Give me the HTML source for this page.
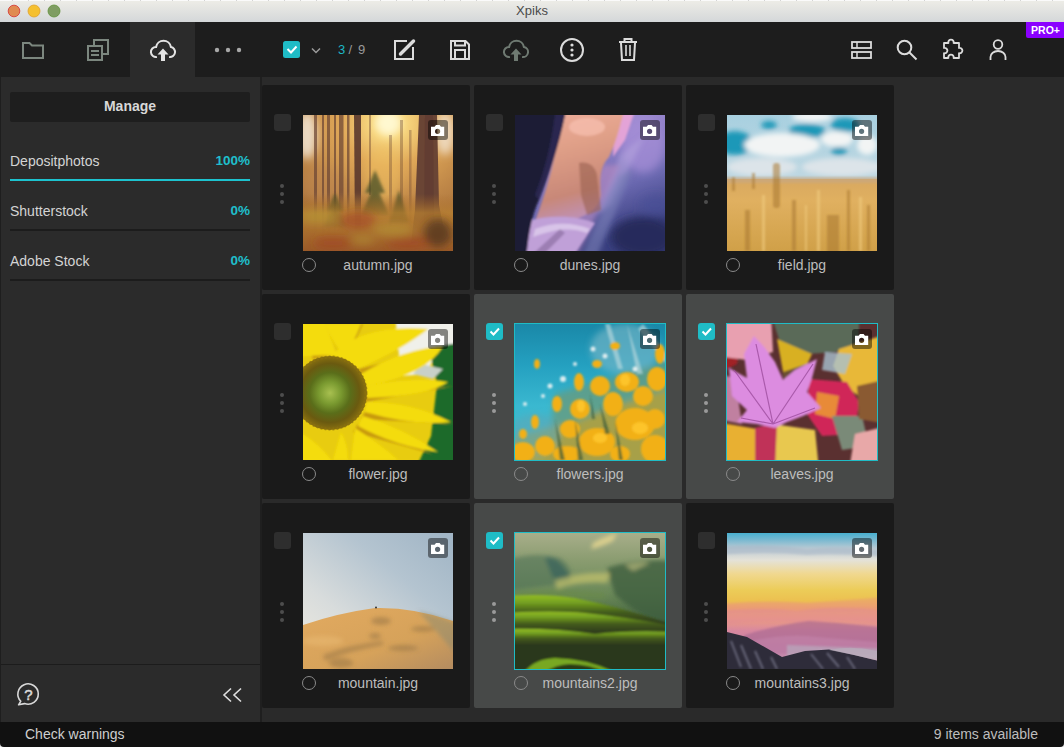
<!DOCTYPE html>
<html><head><meta charset="utf-8"><style>
*{margin:0;padding:0;box-sizing:border-box}
html,body{width:1064px;height:747px;overflow:hidden;background:#e8e8e8;font-family:"Liberation Sans",sans-serif}
.abs{position:absolute}
#title{left:0;top:0;width:1064px;height:22px;background:linear-gradient(#eeede7,#d4d7d9)}
#title:before{content:"";position:absolute;left:0;top:0;width:1064px;height:1px;background:repeating-linear-gradient(90deg,#fafafa 0,#fafafa 12px,#d4d4d4 12px,#d4d4d4 13px,#fafafa 13px,#fafafa 16px)}
#title .t{left:0;width:1064px;top:3px;text-align:center;font-size:13px;color:#4a4a4a}
#toolbar{left:0;top:22px;width:1064px;height:55px;background:#1d1d1d}
#left{left:0;top:77px;width:260px;height:645px;background:#2b2b2b}
#sep{left:260px;top:77px;width:2px;height:645px;background:#1f1f1f}
#grid{left:262px;top:77px;width:802px;height:645px;background:#2a2a2a}
#status{left:0;top:722px;width:1064px;height:25px;background:#111111;border-radius:0 0 4px 4px}
.card{position:absolute;width:208px;height:205px;background:#1a1a1a;border-radius:2px}
.card.sel{background:#474948}
.card .cb{position:absolute;left:12px;top:29px;width:17px;height:17px;border-radius:3px;background:#2e2e2e}
.card.sel .cb{background:#1fbcc6}
.card .img{position:absolute;left:41px;top:30px;width:150px;height:136px;overflow:hidden}
.card.sel .img{box-shadow:0 0 0 1px #1fbcc6}
.card .img svg{display:block}
.card .cam{position:absolute;left:125px;top:5px;width:20px;height:20px;border-radius:3px;background:rgba(0,0,0,.45)}
.card .rad{position:absolute;left:40px;top:173px;width:14px;height:14px;border-radius:50%;border:1px solid #8a8a8a}
.card .nm{position:absolute;left:54px;width:124px;top:172px;text-align:center;font-size:14px;color:#bdbdbd;white-space:nowrap}
.card .dots{position:absolute;left:18px;top:99px;width:4px;height:20px}
.card .dots i{display:block;width:4px;height:4px;border-radius:50%;background:#4d4d4d;margin-bottom:4px}
.card.sel .dots i{background:#9a9a9a}
.lbl{position:absolute;font-size:14px;color:#d4d4d4;white-space:nowrap}
.pct{position:absolute;font-size:13.5px;font-weight:bold;color:#1fbfcc;text-align:right;white-space:nowrap}
</style></head><body>
<div id="title" class="abs">
<svg class="abs" style="left:0;top:0" width="70" height="22"><circle cx="14" cy="11" r="5.8" fill="#e08a50" stroke="#d84a44" stroke-width="1"/><circle cx="34" cy="11" r="6" fill="#f5c02f" stroke="#e0a12a" stroke-width=".8"/><circle cx="54" cy="11" r="6" fill="#7f9d62" stroke="#5f8f3a" stroke-width=".8"/></svg>
<div class="abs t">Xpiks</div></div>
<div id="toolbar" class="abs"><div class="abs" style="left:130px;top:0;width:65px;height:55px;background:#2b2b2b"></div></div>
<div id="left" class="abs">
  <div class="abs" style="left:10px;top:15px;width:240px;height:30px;background:#1e1e1e;border-radius:2px"></div>
  <div class="abs" style="left:10px;top:21px;width:240px;text-align:center;font-size:14px;font-weight:bold;color:#d8d8d8">Manage</div>
  <div class="lbl" style="left:10px;top:76px">Depositphotos</div>
  <div class="pct" style="right:10px;top:76px">100%</div>
  <div class="abs" style="left:10px;top:102px;width:240px;height:2px;background:#1dc3cf"></div>
  <div class="lbl" style="left:10px;top:126px">Shutterstock</div>
  <div class="pct" style="right:10px;top:126px">0%</div>
  <div class="abs" style="left:10px;top:152px;width:240px;height:2px;background:#1c1c1c"></div>
  <div class="lbl" style="left:10px;top:176px">Adobe Stock</div>
  <div class="pct" style="right:10px;top:176px">0%</div>
  <div class="abs" style="left:10px;top:202px;width:240px;height:2px;background:#1c1c1c"></div>
  <div class="abs" style="left:0;top:587px;width:260px;height:1px;background:#1c1c1c"></div>
  <div class="abs" style="left:0;top:0;width:1px;height:645px;background:#1e1e1e"></div>
</div>
<div id="sep" class="abs"></div>
<div id="grid" class="abs"></div>
<div class="card" style="left:262px;top:85px"><div class="cb"></div><div class="dots"><i></i><i></i><i></i></div><div class="img"><svg width="150" height="136" viewBox="0 0 150 136"><defs>
<radialGradient id="a1" cx="0.57" cy="0.06" r="0.9">
 <stop offset="0" stop-color="#fff4c0"/><stop offset="0.12" stop-color="#f8d880"/><stop offset="0.35" stop-color="#e0a858"/><stop offset="0.65" stop-color="#c08848"/><stop offset="1" stop-color="#a06a38"/>
</radialGradient>
<linearGradient id="a2" x1="0" y1="0" x2="0" y2="1">
 <stop offset="0" stop-color="#a86a2a" stop-opacity="0"/><stop offset="0.58" stop-color="#a86a2a" stop-opacity="0"/><stop offset="0.72" stop-color="#b88030" stop-opacity=".75"/><stop offset="1" stop-color="#9a5a28"/>
</linearGradient>
<linearGradient id="af" x1="0" y1="0" x2="0" y2="1"><stop offset="0" stop-color="#fff"/><stop offset=".55" stop-color="#fff"/><stop offset=".85" stop-color="#fff" stop-opacity="0"/></linearGradient>
<mask id="am" maskUnits="userSpaceOnUse" x="-10" y="-10" width="170" height="156"><rect x="-10" y="-10" width="170" height="156" fill="url(#af)"/></mask>
<filter id="ab" x="-10%" y="-10%" width="120%" height="120%"><feGaussianBlur stdDeviation="0.6"/></filter>
<filter id="ab3" x="-20%" y="-20%" width="140%" height="140%"><feGaussianBlur stdDeviation="1.5"/></filter>
<filter id="ab2" x="-20%" y="-20%" width="140%" height="140%"><feGaussianBlur stdDeviation="4"/></filter>
</defs>
<rect width="150" height="136" fill="url(#a1)"/>
<g filter="url(#ab2)">
<ellipse cx="4" cy="20" rx="10" ry="24" fill="#f4ece0" opacity=".8"/>
<ellipse cx="142" cy="18" rx="10" ry="22" fill="#f4e8da" opacity=".75"/>
<ellipse cx="85" cy="8" rx="12" ry="12" fill="#fff8d0"/>
<ellipse cx="80" cy="60" rx="18" ry="30" fill="#f0c060" opacity=".5"/>
<ellipse cx="20" cy="70" rx="22" ry="18" fill="#c08850" opacity=".5"/>
</g>
<g filter="url(#ab)" mask="url(#am)">
<g fill="#6a4434" opacity=".7">
<rect x="11" y="0" width="3" height="120"/><rect x="19" y="0" width="2" height="120"/><rect x="24" y="0" width="3" height="120"/>
<rect x="36" y="0" width="4.5" height="120"/><rect x="44" y="0" width="2.5" height="120"/><rect x="31" y="0" width="2" height="120"/>
<rect x="66" y="0" width="2" height="80" opacity=".6"/><rect x="86" y="20" width="3" height="100" opacity=".5"/><rect x="97" y="5" width="3" height="115" opacity=".55"/><rect x="106" y="15" width="2.5" height="105" opacity=".5"/>
</g>
<path d="M51 0 H58 L58 120 H52 Z" fill="#5a382c" opacity=".9"/>
</g>
<g filter="url(#ab)">
<path d="M116 0 H134 L136 90 L140 110 L150 128 L108 128 L112 95 Z" fill="#6a4434"/>
<path d="M122 0 H130 L131 110 H121 Z" fill="#5a382c" opacity=".5"/>
</g>
<g filter="url(#ab3)" fill="#3e4a22" opacity=".7"><path d="M72 55 L62 78 H82 Z"/><path d="M72 68 L58 100 H86 Z"/><path d="M32 78 L24 96 H40Z"/><path d="M32 88 L20 112 H44 Z"/><path d="M96 75 L86 108 H106 Z"/></g>
<rect width="150" height="136" fill="url(#a2)"/>
<g filter="url(#ab2)">
<g fill="#a03a20" opacity=".5"><ellipse cx="55" cy="105" rx="18" ry="9"/><ellipse cx="30" cy="128" rx="20" ry="6"/><ellipse cx="105" cy="128" rx="22" ry="6"/></g>
<g fill="#b8a038" opacity=".5"><ellipse cx="15" cy="102" rx="18" ry="7"/><ellipse cx="90" cy="115" rx="20" ry="6"/><ellipse cx="60" cy="125" rx="12" ry="4"/></g>
<ellipse cx="135" cy="118" rx="14" ry="14" fill="#4a3020" opacity=".7"/>
</g>
</svg><div class="cam"><svg width="20" height="20" viewBox="0 0 20 20" style="display:block"><path fill-rule="evenodd" d="M3 6.8 H6.6 L8 5 H11.6 L13 6.8 H16.2 V16 H3 Z M12.2 11.3 A2.6 2.6 0 1 0 7 11.3 A2.6 2.6 0 1 0 12.2 11.3 Z" fill="#fff"/></svg></div></div><div class="rad"></div><div class="nm">autumn.jpg</div></div>
<div class="card" style="left:474px;top:85px"><div class="cb"></div><div class="dots"><i></i><i></i><i></i></div><div class="img"><svg width="150" height="136" viewBox="0 0 150 136"><defs>
<linearGradient id="d1" x1="0" y1="0" x2="0.4" y2="1"><stop offset="0" stop-color="#b8a0e0"/><stop offset=".4" stop-color="#9080c8"/><stop offset=".7" stop-color="#6a68b0"/><stop offset="1" stop-color="#3a4080"/></linearGradient>
<linearGradient id="d2" x1="0" y1="0" x2="0.2" y2="1"><stop offset="0" stop-color="#f0b0a0"/><stop offset=".4" stop-color="#e0a088"/><stop offset=".8" stop-color="#c88878"/><stop offset="1" stop-color="#c090b0"/></linearGradient>
<filter id="db" x="-10%" y="-10%" width="120%" height="120%"><feGaussianBlur stdDeviation="1.2"/></filter>
<filter id="db2" x="-30%" y="-30%" width="160%" height="160%"><feGaussianBlur stdDeviation="4"/></filter>
<filter id="db3" x="-30%" y="-30%" width="160%" height="160%"><feGaussianBlur stdDeviation="2.5"/></filter>
</defs>
<rect width="150" height="136" fill="url(#d1)"/>
<g filter="url(#db2)">
<ellipse cx="128" cy="30" rx="22" ry="28" fill="#a890d8" opacity=".7"/>
<ellipse cx="128" cy="122" rx="32" ry="20" fill="#262c5c"/>
<ellipse cx="140" cy="90" rx="15" ry="10" fill="#4a5098" opacity=".6"/>
</g>
<g filter="url(#db3)"><path d="M105 40 L130 20 L96 90 L80 100 Z" fill="#b8a8e0" opacity=".5"/><path d="M88 50 L105 50 L60 146 L35 146 Z" fill="#b088c0" opacity=".7"/><path d="M104 60 L118 55 L80 146 L64 146 Z" fill="#7a80b8" opacity=".6"/></g>
<g filter="url(#db)">
<path d="M100 -10 H122 L110 25 L98 42 Z" fill="#f0a8d8" opacity=".85"/>

<path d="M50 -10 H110 L108 0 C104 15 100 30 94 42 C86 50 84 62 86 80 C84 95 70 104 42 108 L20 106 C30 80 40 48 50 -10 Z" fill="url(#d2)"/>
<ellipse cx="72" cy="12" rx="18" ry="9" fill="#f8c0b0" opacity=".7"/>
<path d="M64 48 C72 46 80 50 82 60 L86 95 L72 100 L66 80 Z" fill="#9a6050" opacity=".6"/>
<path d="M12 106 C35 100 60 100 80 108 L55 146 H8 Z" fill="#c0a0d8"/>
<path d="M20 114 C40 106 60 108 75 114 L72 118 C55 112 40 114 18 122 Z" fill="#e8dcf4" opacity=".6"/>
<path d="M10 146 L45 114 L50 118 L22 146Z" fill="#5a4070" opacity=".35"/>
<path d="M-10 -10 H52 L50 0 C44 30 34 60 24 85 C17 100 14 115 11 146 H-10 Z" fill="#1c1b36"/>
<path d="M40 -10 H52 L50 0 C44 30 34 60 24 85 L20 80 C30 55 36 30 40 0Z" fill="#2e2c58" opacity=".8"/>
</g>
</svg><div class="cam"><svg width="20" height="20" viewBox="0 0 20 20" style="display:block"><path fill-rule="evenodd" d="M3 6.8 H6.6 L8 5 H11.6 L13 6.8 H16.2 V16 H3 Z M12.2 11.3 A2.6 2.6 0 1 0 7 11.3 A2.6 2.6 0 1 0 12.2 11.3 Z" fill="#fff"/></svg></div></div><div class="rad"></div><div class="nm">dunes.jpg</div></div>
<div class="card" style="left:686px;top:85px"><div class="cb"></div><div class="dots"><i></i><i></i><i></i></div><div class="img"><svg width="150" height="136" viewBox="0 0 150 136"><defs>
<linearGradient id="f1" x1="0" y1="0" x2="0" y2="1"><stop offset="0" stop-color="#a8d0e0"/><stop offset=".5" stop-color="#c0d8e2"/><stop offset="1" stop-color="#c8d8e0"/></linearGradient>
<linearGradient id="f2" x1="0" y1="0" x2="0" y2="1"><stop offset="0" stop-color="#d8a860"/><stop offset=".3" stop-color="#e0b060"/><stop offset="1" stop-color="#d0a048"/></linearGradient>
<filter id="fb" x="-20%" y="-20%" width="140%" height="140%"><feGaussianBlur stdDeviation="2.5"/></filter>
<filter id="fb1" x="-20%" y="-20%" width="140%" height="140%"><feGaussianBlur stdDeviation="0.8"/></filter>
</defs>
<rect width="150" height="136" fill="url(#f1)"/>
<g filter="url(#fb)">
<g fill="#1e98b8"><ellipse cx="8" cy="28" rx="18" ry="12"/><ellipse cx="80" cy="16" rx="18" ry="7"/><ellipse cx="118" cy="10" rx="14" ry="7"/><ellipse cx="112" cy="36" rx="8" ry="4"/><ellipse cx="42" cy="10" rx="8" ry="4"/></g>
<g fill="#f2f4f4"><ellipse cx="55" cy="30" rx="38" ry="12"/><ellipse cx="110" cy="24" rx="16" ry="8"/><ellipse cx="85" cy="2" rx="20" ry="5"/><ellipse cx="140" cy="30" rx="10" ry="10"/></g>
<g fill="#e0e6ea" opacity=".9"><ellipse cx="35" cy="52" rx="35" ry="9"/><ellipse cx="115" cy="52" rx="40" ry="9"/></g>
</g>
<rect y="64" width="150" height="72" fill="url(#f2)"/>
<g filter="url(#fb1)">
<rect x="-5" y="62" width="160" height="6" fill="#c8a880" opacity=".7"/>
<g fill="#a87830" opacity=".55"><rect x="46" y="48" width="7" height="45" rx="3"/><rect x="100" y="100" width="12" height="40"/><rect x="18" y="95" width="5" height="41"/><rect x="65" y="85" width="4" height="51"/><rect x="120" y="75" width="3" height="61"/><rect x="5" y="62" width="3" height="14"/><rect x="25" y="58" width="3" height="16"/><rect x="140" y="90" width="3" height="46"/></g>
<g fill="#f0cc80" opacity=".6"><rect x="35" y="80" width="3" height="56"/><rect x="90" y="75" width="3" height="61"/><rect x="132" y="82" width="3" height="54"/><rect x="78" y="90" width="2" height="46"/></g>
</g>
</svg><div class="cam"><svg width="20" height="20" viewBox="0 0 20 20" style="display:block"><path fill-rule="evenodd" d="M3 6.8 H6.6 L8 5 H11.6 L13 6.8 H16.2 V16 H3 Z M12.2 11.3 A2.6 2.6 0 1 0 7 11.3 A2.6 2.6 0 1 0 12.2 11.3 Z" fill="#fff"/></svg></div></div><div class="rad"></div><div class="nm">field.jpg</div></div>
<div class="card" style="left:262px;top:294px"><div class="cb"></div><div class="dots"><i></i><i></i><i></i></div><div class="img"><svg width="150" height="136" viewBox="0 0 150 136"><defs>
<radialGradient id="s1" cx=".5" cy=".5" r=".5"><stop offset="0" stop-color="#a8c050"/><stop offset=".3" stop-color="#7a9a30"/><stop offset=".55" stop-color="#5a6e1a"/><stop offset=".8" stop-color="#6a5a10"/><stop offset="1" stop-color="#8a7010"/></radialGradient>
<filter id="sb" x="-10%" y="-10%" width="120%" height="120%"><feGaussianBlur stdDeviation="1"/></filter>
</defs>
<rect width="150" height="136" fill="#e8cc10"/>
<g filter="url(#sb)">
<path d="M92 -10 H160 V30 L134 24 L124 50 L98 52 Z" fill="#f0f0ea"/>
<path d="M126 24 L160 18 V146 H112 L128 112 L134 60 Z" fill="#1e6a2a"/>
<path d="M118 40 L140 45 L130 55 L110 50Z" fill="#c8d0c8"/>
<g fill="#c89a10">
<path d="M0 0 H20 L35 30 L10 35 Z"/><path d="M40 0 L60 0 L45 32 Z"/>
<path d="M55 45 L140 25 L60 55Z"/><path d="M62 72 L150 62 L62 78 Z"/><path d="M62 88 L150 100 L58 95Z"/><path d="M55 100 L130 130 L50 108Z"/>
</g>
<g fill="#f4dc08">
<path d="M30 30 Q60 0 125 5 Q100 25 55 45 Z"/>
<path d="M58 50 Q100 25 140 22 Q125 50 64 62 Z"/>
<path d="M64 62 Q110 52 145 58 Q125 72 64 74 Z"/>
<path d="M64 78 Q110 78 148 98 Q110 102 62 88 Z"/>
<path d="M60 92 Q100 104 135 128 Q92 122 55 102 Z"/>
<path d="M52 104 Q80 122 95 136 H48 Z"/>
<path d="M-10 104 Q20 120 35 146 H-10 Z"/><path d="M38 108 Q45 120 45 136 H30Z"/>
<path d="M-10 -10 H18 Q30 20 35 32 Q15 30 -10 34 Z"/><path d="M22 0 H58 Q50 20 42 32 Q30 20 22 0Z"/>
</g>
</g>
<circle cx="27" cy="69" r="37" fill="url(#s1)"/>
<circle cx="27" cy="69" r="36" fill="none" stroke="#8a7010" stroke-width="3" stroke-dasharray="2 2" opacity=".7"/>
</svg><div class="cam"><svg width="20" height="20" viewBox="0 0 20 20" style="display:block"><path fill-rule="evenodd" d="M3 6.8 H6.6 L8 5 H11.6 L13 6.8 H16.2 V16 H3 Z M12.2 11.3 A2.6 2.6 0 1 0 7 11.3 A2.6 2.6 0 1 0 12.2 11.3 Z" fill="#fff"/></svg></div></div><div class="rad"></div><div class="nm">flower.jpg</div></div>
<div class="card sel" style="left:474px;top:294px"><div class="cb"><svg width="17" height="17" style="display:block"><path d="M4.5 8.5 L7.5 11.5 L13 5.5" fill="none" stroke="#fff" stroke-width="2"/></svg></div><div class="dots"><i></i><i></i><i></i></div><div class="img"><svg width="150" height="136" viewBox="0 0 150 136"><defs>
<linearGradient id="w1" x1="0" y1="0" x2="0" y2="1"><stop offset="0" stop-color="#1a88a8"/><stop offset=".3" stop-color="#24a0c0"/><stop offset=".6" stop-color="#3ab8d0"/><stop offset="1" stop-color="#48b8c8"/></linearGradient>
<filter id="wb" x="-10%" y="-10%" width="120%" height="120%"><feGaussianBlur stdDeviation="1.2"/></filter>
<filter id="wb2" x="-20%" y="-20%" width="140%" height="140%"><feGaussianBlur stdDeviation="3"/></filter>
</defs>
<rect width="150" height="136" fill="url(#w1)"/>
<g filter="url(#wb2)">
<ellipse cx="110" cy="25" rx="35" ry="25" fill="#7ab8c8" opacity=".6"/>
<path d="M40 70 L160 35 V146 H30Z" fill="#6a9a7a" opacity=".75"/>
<path d="M-10 146 L-10 115 Q30 104 60 98 Q100 82 160 62 V146 Z" fill="#b8a038" opacity=".8"/>
<ellipse cx="20" cy="110" rx="25" ry="20" fill="#5aa8b8" opacity=".6"/>
</g>
<g filter="url(#wb)">
<g fill="#c0dce0" opacity=".6"><path d="M95 0 L108 45 L103 45 L90 0Z"/><path d="M112 0 L128 50 L122 50Z"/><path d="M128 0 L160 40 V50 L123 5Z"/></g>
<g fill="#eef4f4" opacity=".9"><circle cx="78" cy="25" r="2.5"/><circle cx="60" cy="40" r="2"/><circle cx="48" cy="55" r="3"/><circle cx="35" cy="62" r="2.5"/><circle cx="10" cy="80" r="2"/><circle cx="90" cy="32" r="2.5"/><circle cx="120" cy="45" r="2.5"/><circle cx="28" cy="72" r="2"/></g>
<g fill="#f2b018">
<ellipse cx="8" cy="128" rx="12" ry="10"/><ellipse cx="30" cy="122" rx="10" ry="10"/><ellipse cx="20" cy="98" rx="4" ry="7"/><ellipse cx="8" cy="110" rx="4" ry="5"/>
<ellipse cx="55" cy="105" rx="10" ry="9"/><ellipse cx="42" cy="80" rx="5" ry="8"/><ellipse cx="65" cy="85" rx="10" ry="10"/><ellipse cx="64" cy="58" rx="5" ry="9"/>
<ellipse cx="85" cy="62" rx="10" ry="10"/><ellipse cx="98" cy="80" rx="10" ry="12"/><ellipse cx="112" cy="58" rx="12" ry="10"/><ellipse cx="128" cy="72" rx="10" ry="10"/>
<ellipse cx="142" cy="55" rx="10" ry="12"/><ellipse cx="145" cy="30" rx="5" ry="10"/><ellipse cx="120" cy="100" rx="20" ry="16"/><ellipse cx="82" cy="118" rx="18" ry="14"/>
<ellipse cx="140" cy="125" rx="14" ry="14"/><ellipse cx="52" cy="130" rx="14" ry="8"/><ellipse cx="82" cy="40" rx="5" ry="4"/><ellipse cx="22" cy="40" rx="3" ry="5"/><ellipse cx="100" cy="22" rx="5" ry="4"/><ellipse cx="105" cy="130" rx="10" ry="8"/><ellipse cx="140" cy="95" rx="10" ry="10"/>
</g>
<g fill="#ffc830" opacity=".85"><ellipse cx="110" cy="56" rx="5" ry="6"/><ellipse cx="66" cy="82" rx="4" ry="6"/><ellipse cx="125" cy="104" rx="8" ry="6"/><ellipse cx="85" cy="114" rx="7" ry="5"/></g>
<g fill="#3a5a3a" opacity=".7"><path d="M40 95 L50 136 H45 Z"/><path d="M85 80 L95 110 L90 110Z"/><path d="M100 95 L108 136 H104Z"/><path d="M60 95 L68 136 H63Z"/><path d="M75 70 L80 95 L77 95Z"/></g>
</g>
</svg><div class="cam"><svg width="20" height="20" viewBox="0 0 20 20" style="display:block"><path fill-rule="evenodd" d="M3 6.8 H6.6 L8 5 H11.6 L13 6.8 H16.2 V16 H3 Z M12.2 11.3 A2.6 2.6 0 1 0 7 11.3 A2.6 2.6 0 1 0 12.2 11.3 Z" fill="#fff"/></svg></div></div><div class="rad"></div><div class="nm">flowers.jpg</div></div>
<div class="card sel" style="left:686px;top:294px"><div class="cb"><svg width="17" height="17" style="display:block"><path d="M4.5 8.5 L7.5 11.5 L13 5.5" fill="none" stroke="#fff" stroke-width="2"/></svg></div><div class="dots"><i></i><i></i><i></i></div><div class="img"><svg width="150" height="136" viewBox="0 0 150 136"><defs><filter id="lb" x="-10%" y="-10%" width="120%" height="120%"><feGaussianBlur stdDeviation="1"/></filter></defs>
<rect width="150" height="136" fill="#5a3030"/>
<g filter="url(#lb)">
<path d="M-10 -10 H20 L10 40 L-10 50Z" fill="#a02028"/>
<path d="M44 -10 H132 V20 L110 28 L80 30 L55 25 Z" fill="#5a6a58"/>
<path d="M-10 -10 L44 -10 L46 28 L20 36 L-10 32Z" fill="#e8a0b0"/>
<path d="M112 25 L160 10 V60 L140 78 L118 62 L106 42Z" fill="#e8b838"/>
<path d="M98 28 L125 30 L118 50 L95 46Z" fill="#a8c0d0" opacity=".8"/>
<path d="M50 15 L85 30 L78 45 L58 58 Z" fill="#d8b020"/>
<path d="M56 48 L80 40 L78 70 L58 72Z" fill="#6a5030"/>
<path d="M82 55 L120 58 L132 78 L128 110 L95 112 L80 90Z" fill="#d02858"/>
<path d="M90 68 L112 72 L108 95 L88 90Z" fill="#e88a38"/>
<path d="M105 92 L135 92 L142 122 L115 126Z" fill="#7a8a78"/>
<path d="M130 62 L160 55 V100 L132 95Z" fill="#8a5a30"/>
<path d="M-10 98 L30 105 L32 146 H-10 Z" fill="#e8b030"/>
<path d="M46 100 L88 106 L92 146 H44 Z" fill="#e8c850"/>
<path d="M28 104 L50 98 L48 146 H28Z" fill="#c03058"/>
<path d="M128 110 L160 102 V146 H122Z" fill="#e8a8a8"/>
<path d="M-10 48 L8 55 L15 100 L-10 95Z" fill="#c080a0"/>
<path d="M27 12 L38 24 L48 38 L56 56 L68 46 L90 35 L85 54 L80 68 L94 84 L76 92 L60 98 L48 104 L30 100 L10 98 L20 86 L5 72 L2 44 L20 54 L17 30 Z" fill="#dc8ce0"/>
</g>
<path d="M46 100 L29 20 M46 100 L86 40 M46 100 L7 46 M46 100 L88 84 M46 100 L14 94" stroke="#9a4a9a" stroke-width="1.2" fill="none" opacity=".75"/>
</svg><div class="cam"><svg width="20" height="20" viewBox="0 0 20 20" style="display:block"><path fill-rule="evenodd" d="M3 6.8 H6.6 L8 5 H11.6 L13 6.8 H16.2 V16 H3 Z M12.2 11.3 A2.6 2.6 0 1 0 7 11.3 A2.6 2.6 0 1 0 12.2 11.3 Z" fill="#fff"/></svg></div></div><div class="rad"></div><div class="nm">leaves.jpg</div></div>
<div class="card" style="left:262px;top:503px"><div class="cb"></div><div class="dots"><i></i><i></i><i></i></div><div class="img"><svg width="150" height="136" viewBox="0 0 150 136"><defs>
<linearGradient id="m1" x1="0" y1="1" x2="0.9" y2="0"><stop offset="0" stop-color="#f0ece0"/><stop offset=".35" stop-color="#d8dcdc"/><stop offset=".7" stop-color="#b4c4d0"/><stop offset="1" stop-color="#a2b6c6"/></linearGradient>
<linearGradient id="m2" x1="0" y1="0" x2="1" y2="1"><stop offset="0" stop-color="#e2aa60"/><stop offset=".6" stop-color="#d6a25a"/><stop offset="1" stop-color="#b48c60"/></linearGradient>
<filter id="mb" x="-20%" y="-20%" width="140%" height="140%"><feGaussianBlur stdDeviation="2"/></filter>
</defs>
<rect width="150" height="136" fill="url(#m1)"/>
<path d="M0 92 Q35 80 72 75 Q110 74 150 88 V136 H0 Z" fill="url(#m2)"/>
<g filter="url(#mb)">
<g fill="#8a6a40" opacity=".45"><ellipse cx="78" cy="88" rx="10" ry="4"/><ellipse cx="72" cy="103" rx="6" ry="3"/><path d="M20 122 Q45 112 80 108 L80 112 Q45 118 22 128Z"/><ellipse cx="38" cy="130" rx="12" ry="5"/><ellipse cx="100" cy="115" rx="15" ry="3"/><ellipse cx="120" cy="96" rx="12" ry="3"/></g>
<path d="M115 78 Q140 84 152 90 V120 Q135 100 115 78Z" fill="#8a8a70" opacity=".5"/>
<ellipse cx="20" cy="108" rx="20" ry="5" fill="#e8b870" opacity=".6"/>
</g>
<circle cx="73" cy="74.5" r="1" fill="#333"/>
</svg><div class="cam"><svg width="20" height="20" viewBox="0 0 20 20" style="display:block"><path fill-rule="evenodd" d="M3 6.8 H6.6 L8 5 H11.6 L13 6.8 H16.2 V16 H3 Z M12.2 11.3 A2.6 2.6 0 1 0 7 11.3 A2.6 2.6 0 1 0 12.2 11.3 Z" fill="#fff"/></svg></div></div><div class="rad"></div><div class="nm">mountain.jpg</div></div>
<div class="card sel" style="left:474px;top:503px"><div class="cb"><svg width="17" height="17" style="display:block"><path d="M4.5 8.5 L7.5 11.5 L13 5.5" fill="none" stroke="#fff" stroke-width="2"/></svg></div><div class="dots"><i></i><i></i><i></i></div><div class="img"><svg width="150" height="136" viewBox="0 0 150 136"><defs>
<linearGradient id="g1" x1="0" y1="0" x2="0" y2="1"><stop offset="0" stop-color="#a8ae8a"/><stop offset=".2" stop-color="#8a9c70"/><stop offset=".45" stop-color="#6a8858"/><stop offset=".7" stop-color="#3a5a38"/><stop offset="1" stop-color="#2a3a20"/></linearGradient>
<linearGradient id="gr0" gradientUnits="userSpaceOnUse" x1="0" y1="60" x2="0" y2="92"><stop offset="0" stop-color="#9cc428"/><stop offset=".3" stop-color="#74a020"/><stop offset=".6" stop-color="#445c1e"/><stop offset="1" stop-color="#2c381c"/></linearGradient><linearGradient id="gr1" gradientUnits="userSpaceOnUse" x1="0" y1="77" x2="0" y2="100"><stop offset="0" stop-color="#9cc428"/><stop offset=".3" stop-color="#74a020"/><stop offset=".6" stop-color="#445c1e"/><stop offset="1" stop-color="#2c381c"/></linearGradient><linearGradient id="gr2" gradientUnits="userSpaceOnUse" x1="0" y1="95" x2="0" y2="112"><stop offset="0" stop-color="#9cc428"/><stop offset=".3" stop-color="#74a020"/><stop offset=".6" stop-color="#445c1e"/><stop offset="1" stop-color="#2c381c"/></linearGradient>
<filter id="gb" x="-20%" y="-20%" width="140%" height="140%"><feGaussianBlur stdDeviation="2"/></filter>
<filter id="gb2" x="-20%" y="-20%" width="140%" height="140%"><feGaussianBlur stdDeviation="0.8"/></filter>
</defs>
<rect width="150" height="136" fill="url(#g1)"/>
<g filter="url(#gb)">
<path d="M78 10 Q88 4 102 0 L98 8 Q86 14 76 16Z" fill="#e8d890" opacity=".8"/>
<path d="M-10 28 Q20 18 45 25 Q60 35 55 50 L-10 58Z" fill="#4a7058" opacity=".55"/>
<path d="M30 25 Q45 22 55 45 L38 45Z" fill="#2a5a5a" opacity=".55"/>
<path d="M92 35 Q125 25 160 28 V95 Q125 85 100 62Z" fill="#3e5e40" opacity=".8"/>
<path d="M40 48 Q65 38 95 40 L92 50 Q65 48 42 56Z" fill="#d8d070" opacity=".55"/>
<path d="M110 32 Q125 28 135 30 L118 38Z" fill="#e0d890" opacity=".5"/>
<path d="M0 60 Q50 54 90 60 L90 66 L0 66Z" fill="#6a8a48" opacity=".6"/>
</g>
<g filter="url(#gb2)">
<path d="M-10 63 Q30 60 60 65 Q105 74 160 92 V146 H-10 Z" fill="url(#gr0)"/>
<path d="M-10 80 Q40 77 70 80 Q110 84 160 93 V146 H-10 Z" fill="url(#gr1)"/>
<path d="M-10 96 Q40 95 80 101 Q115 97 160 99 V146 H-10 Z" fill="url(#gr2)"/>
<path d="M5 146 Q15 126 40 125 Q80 126 112 146Z" fill="#78a820"/>
<path d="M22 146 Q35 132 55 131 Q85 132 98 146Z" fill="#2a3a18"/>
</g>
</svg><div class="cam"><svg width="20" height="20" viewBox="0 0 20 20" style="display:block"><path fill-rule="evenodd" d="M3 6.8 H6.6 L8 5 H11.6 L13 6.8 H16.2 V16 H3 Z M12.2 11.3 A2.6 2.6 0 1 0 7 11.3 A2.6 2.6 0 1 0 12.2 11.3 Z" fill="#fff"/></svg></div></div><div class="rad"></div><div class="nm">mountains2.jpg</div></div>
<div class="card" style="left:686px;top:503px"><div class="cb"></div><div class="dots"><i></i><i></i><i></i></div><div class="img"><svg width="150" height="136" viewBox="0 0 150 136"><defs>
<linearGradient id="n1" x1="0" y1="0" x2="0" y2="1">
<stop offset="0" stop-color="#48b0d0"/><stop offset=".05" stop-color="#78b8d0"/><stop offset=".12" stop-color="#c0ccd4"/><stop offset=".2" stop-color="#e4e2d8"/><stop offset=".3" stop-color="#f0d890"/><stop offset=".42" stop-color="#eccc58"/><stop offset=".5" stop-color="#ecc050"/><stop offset=".55" stop-color="#eca868"/><stop offset=".63" stop-color="#ec9c80"/><stop offset=".72" stop-color="#d888a0"/><stop offset=".85" stop-color="#c880a8"/><stop offset="1" stop-color="#c0a0b0"/>
</linearGradient>
<filter id="nb" x="-20%" y="-20%" width="140%" height="140%"><feGaussianBlur stdDeviation="1.2"/></filter>
</defs>
<rect width="150" height="136" fill="url(#n1)"/>
<g filter="url(#nb)">
<path d="M-10 14 Q40 10 80 16 Q110 12 160 18 V24 Q110 20 80 22 Q40 18 -10 22Z" fill="#a8b8c8" opacity=".6"/>
<path d="M-10 72 Q40 66 80 70 L160 64 V78 L-10 80Z" fill="#e89080" opacity=".45"/>
<path d="M-10 78 Q40 74 70 78 Q110 72 160 78 V90 Q110 86 80 90 Q40 86 -10 92Z" fill="#e08a98" opacity=".5"/>
<path d="M18 102 Q50 92 82 88 Q120 90 160 95 V122 L0 120Z" fill="#a86890" opacity=".65"/>
<path d="M25 108 Q60 100 90 104 L160 110 V124 L25 122Z" fill="#c888b0" opacity=".5"/>
<path d="M60 112 L160 116 V126 L60 124Z" fill="#b8b0c0" opacity=".6"/>
</g>
<path d="M0 99 L20 104 L55 124 L78 118 L102 116.5 L127 122 L150 127.5 V136 H0 Z" fill="#2e2c3a"/><path d="M102 117 L127 122 L150 127.5 V118 Q125 112 102 117Z" fill="#b8b8c0" opacity=".5"/>
<g filter="url(#nb)"><path d="M4 108 L14 134 M14 112 L24 136 M28 118 L36 136 M44 124 L50 136 M84 121 L96 136 M100 120 L112 134 M120 124 L128 136" stroke="#8a8aa0" stroke-width="2" opacity=".6"/></g>
</svg><div class="cam"><svg width="20" height="20" viewBox="0 0 20 20" style="display:block"><path fill-rule="evenodd" d="M3 6.8 H6.6 L8 5 H11.6 L13 6.8 H16.2 V16 H3 Z M12.2 11.3 A2.6 2.6 0 1 0 7 11.3 A2.6 2.6 0 1 0 12.2 11.3 Z" fill="#fff"/></svg></div></div><div class="rad"></div><div class="nm">mountains3.jpg</div></div>
<div id="status" class="abs">
  <div class="abs" style="left:25px;top:4px;font-size:14px;color:#cfcfcf">Check warnings</div>
  <div class="abs" style="right:26px;top:4px;font-size:14px;color:#bdbdbd">9 items available</div>
</div>
<svg class="abs" style="left:0;top:0;pointer-events:none" width="1064" height="747" viewBox="0 0 1064 747">
<g fill="none" stroke-linejoin="miter">
<!-- folder -->
<path d="M23 58 V43 H29.5 L32 45.5 H43 V58 Z" stroke="#7c877f" stroke-width="2"/>
<!-- files -->
<rect x="88" y="46" width="14" height="14" stroke="#7c877f" stroke-width="2"/>
<path d="M94 45 V40 H108 V54 H103" stroke="#7c877f" stroke-width="2"/>
<path d="M91 51 H99 M91 55 H99" stroke="#7c877f" stroke-width="2"/>
<!-- cloud upload active -->
<path d="M156.9 56.9 A5 5 0 1 1 156.1 47 A7.5 7.5 0 0 1 170.9 47 A5 5 0 1 1 169.1 56.9" stroke="#e4e4e4" stroke-width="2"/>
<path d="M163 48.5 L168.5 54.5 H165 V61 H161 V54.5 H157.5 Z" fill="#e4e4e4"/>
<!-- dots -->
<circle cx="217" cy="50" r="2.2" fill="#a8a8a8"/><circle cx="228" cy="50" r="2.2" fill="#a8a8a8"/><circle cx="239" cy="50" r="2.2" fill="#a8a8a8"/>
<!-- select checkbox -->
<rect x="283" y="41" width="17" height="17" rx="2.5" fill="#1fbcc6"/>
<path d="M287.5 49 L291 52.5 L296.5 46.5" stroke="#fff" stroke-width="2"/>
<path d="M312 48.5 L316 52.5 L320 48.5" stroke="#9a9a9a" stroke-width="1.5"/>
<!-- edit -->
<path d="M407 41 H395 V59 H413 V47" stroke="#dcdcdc" stroke-width="2"/>
<path d="M400.5 54 L413.5 41" stroke="#dcdcdc" stroke-width="3.5" stroke-linecap="round"/>
<!-- save -->
<path d="M451 41 H465.5 L469 44.5 V59 H451 Z" stroke="#dcdcdc" stroke-width="2"/>
<path d="M455 41 V45.5 H465 V41" stroke="#dcdcdc" stroke-width="2"/>
<path d="M455 59 V50 H465 V59" stroke="#dcdcdc" stroke-width="2"/>
<!-- cloud disabled -->
<path d="M509.9 56.9 A5 5 0 1 1 509.1 47 A7.5 7.5 0 0 1 523.9 47 A5 5 0 1 1 522.1 56.9" stroke="#6f7a72" stroke-width="2"/>
<path d="M516 48.5 L521.5 54.5 H518 V61 H514 V54.5 H510.5 Z" fill="#6f7a72"/>
<!-- info -->
<circle cx="572" cy="50" r="11" stroke="#dcdcdc" stroke-width="2"/>
<circle cx="572" cy="45" r="1.6" fill="#dcdcdc"/><circle cx="572" cy="50" r="1.6" fill="#dcdcdc"/><circle cx="572" cy="55" r="1.6" fill="#dcdcdc"/>
<!-- trash -->
<path d="M624.5 41 V39 H631.5 V41" stroke="#dcdcdc" stroke-width="2"/>
<path d="M619 42 H637" stroke="#dcdcdc" stroke-width="2"/>
<path d="M621 43 L622 60 H634 L635 43" stroke="#dcdcdc" stroke-width="2"/>
<path d="M626 45 V56 M630 45 V56" stroke="#dcdcdc" stroke-width="1.6"/>
<!-- list -->
<rect x="852" y="42" width="19" height="6" stroke="#dcdcdc" stroke-width="1.8"/>
<rect x="852" y="52" width="19" height="6" stroke="#dcdcdc" stroke-width="1.8"/>
<path d="M857 42 V48 M857 52 V58" stroke="#dcdcdc" stroke-width="1.5"/>
<!-- search -->
<circle cx="904.5" cy="47.5" r="6.8" stroke="#dcdcdc" stroke-width="2"/>
<path d="M909.5 52.5 L916.5 59.5" stroke="#dcdcdc" stroke-width="2"/>
<!-- puzzle -->
<path d="M944 43 H948.4 A2.7 2.7 0 1 1 953.6 43 H959 V48 A2.7 2.7 0 1 1 959 53.2 V58 H953.6 A2.7 2.7 0 1 0 948.4 58 H944 V53.2 A2.7 2.7 0 1 0 944 48 Z" stroke="#dcdcdc" stroke-width="1.8" stroke-linejoin="round"/>
<!-- person -->
<circle cx="998" cy="44.5" r="4.3" stroke="#dcdcdc" stroke-width="1.8"/>
<path d="M990.5 60 V57 A7.5 6 0 0 1 1005.5 57 V60" stroke="#dcdcdc" stroke-width="1.8"/>
<!-- help -->
<path d="M20.8 701.2 A10.2 10.2 0 1 1 24.5 703.6 L18.6 704.8 Z" stroke="#d9d9d9" stroke-width="1.6" stroke-linejoin="round"/>
<!-- collapse -->
<path d="M231 688.5 L224 695 L231 701.5 M241 688.5 L234 695 L241 701.5" stroke="#dedede" stroke-width="1.6"/>
</g>
<text x="28.3" y="699.5" text-anchor="middle" font-family="Liberation Sans" font-size="15" fill="#d9d9d9" stroke="#d9d9d9" stroke-width=".5">?</text>
<path d="M1026 22 H1064 V38 H1028 A2 2 0 0 1 1026 36 Z" fill="#8a00ff"/>
<text x="1045.5" y="34" text-anchor="middle" font-family="Liberation Sans" font-weight="bold" font-size="10.5" fill="#fff">PRO+</text>
<text x="338" y="54" font-family="Liberation Sans" font-size="13" fill="#1cb6c4">3</text>
<text x="348.5" y="54" font-family="Liberation Sans" font-size="13" fill="#9a9a9a">/</text>
<text x="358" y="54" font-family="Liberation Sans" font-size="13" fill="#9a9a9a">9</text>
</svg>
</body></html>
